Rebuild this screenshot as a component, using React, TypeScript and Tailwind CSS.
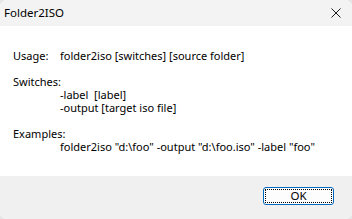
import React from "react";

export default function App() {
  const font = { fontFamily: '"Noto Sans", "Open Sans", sans-serif' };
  return (
    <div className="w-[352px] h-[219px] bg-[#e6e6e6]" style={font}>
      <div className="w-full h-full flex flex-col overflow-hidden rounded-[7px] bg-white">
        <div className="h-[26px] bg-[#f3f3f3] flex items-center justify-between pl-[4px] pr-[11px]">
          <span className="text-[11.5px] leading-none text-black">Folder2ISO</span>
          <svg width="10" height="10" viewBox="0 0 10 10" className="block">
            <path d="M0.5 0.5 L9.5 9.5 M9.5 0.5 L0.5 9.5" stroke="#1a1a1a" strokeWidth="1" fill="none" />
          </svg>
        </div>
        <div className="flex-1 bg-white pl-[13px] pt-[23px] text-[11px] leading-[13px] text-black">
          <div className="flex">
            <span className="w-[47px]">Usage:</span>
            <span>folder2iso [switches] [source folder]</span>
          </div>
          <div className="h-[13px]" />
          <div>Switches:</div>
          <div className="pl-[47px] whitespace-pre">-label  [label]</div>
          <div className="pl-[47px]">-output [target iso file]</div>
          <div className="h-[13px]" />
          <div>Examples:</div>
          <div className="pl-[47px]">folder2iso "d:\foo" -output "d:\foo.iso" -label "foo"</div>
        </div>
        <div className="h-[43px] bg-[#f0f0f0] flex items-start justify-end pr-[18px] pt-[11px]">
          <button className="w-[71px] h-[18px] rounded-[3px] border border-[#0067c0] bg-[#fdfdfd] p-[1px] flex">
            <span className="flex-1 flex items-center justify-center border border-dotted border-black text-[11.5px] leading-none text-black">
              OK
            </span>
          </button>
        </div>
      </div>
    </div>
  );
}
